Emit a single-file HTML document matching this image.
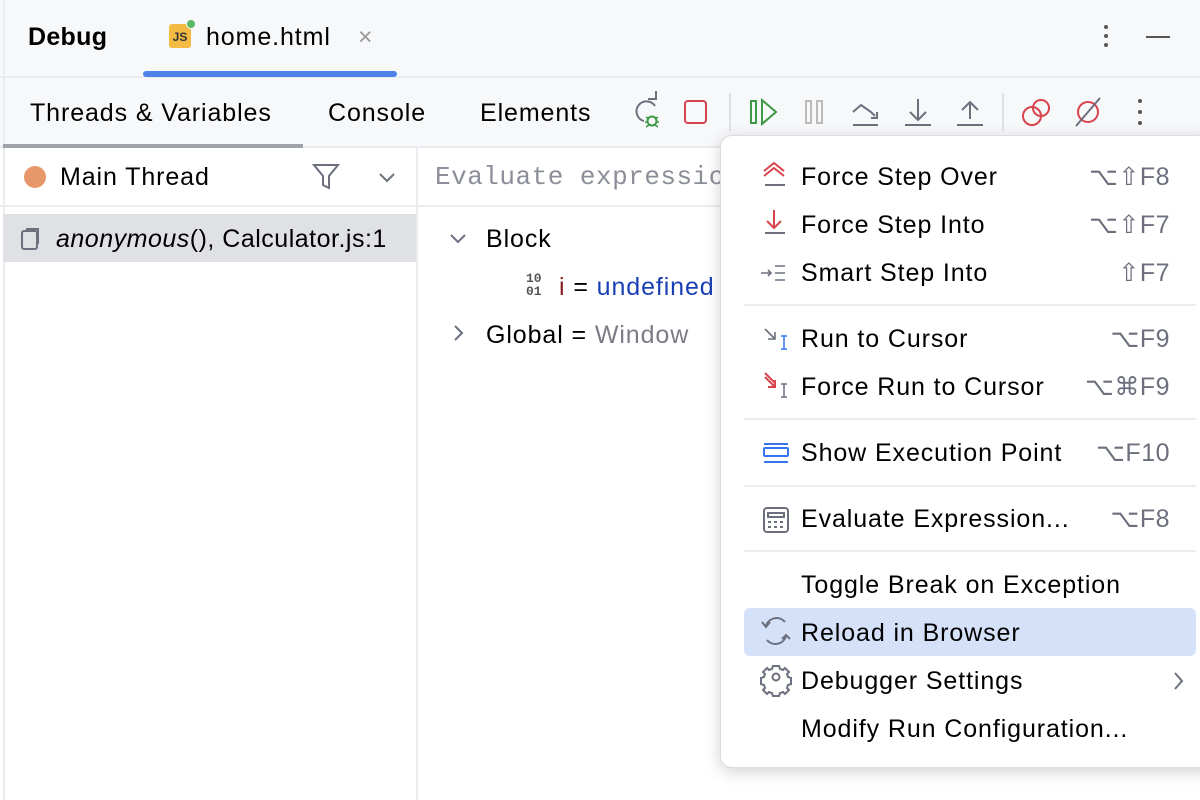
<!DOCTYPE html>
<html><head><style>
*{margin:0;padding:0;box-sizing:border-box}
body{width:1200px;height:800px;overflow:hidden;background:#fff;font-family:"Liberation Sans",sans-serif;color:#000;position:relative}
.abs{position:absolute}
.t{position:absolute;font-size:25px;letter-spacing:0.9px;white-space:nowrap;line-height:1}
.mi{position:absolute;left:801px;font-size:25px;letter-spacing:0.9px;line-height:1;white-space:nowrap}
.sc{position:absolute;right:30px;font-size:25px;letter-spacing:0.5px;color:#6c707e;line-height:1}
.sep{position:absolute;left:744px;width:452px;height:2px;background:#ebecf0}
</style></head><body>
<div class="abs" style="left:0;top:0;width:1200px;height:148px;background:#f7f8fa"></div>
<div class="abs" style="left:3px;top:0;width:2px;height:800px;background:#ebecf0"></div>
<div class="abs" style="left:0;top:76px;width:1200px;height:2px;background:#ebecf0"></div>
<div class="abs" style="left:0;top:146px;width:1200px;height:2px;background:#ebecf0"></div>
<div class="t" style="left:28px;top:25px;font-weight:bold;letter-spacing:0.3px">Debug</div>
<div class="abs" style="left:169px;top:24px;width:22px;height:24px;background:#f4bb44;border-radius:3px;font-size:12px;font-weight:bold;line-height:26px;text-align:center;color:#333">JS</div>
<div class="abs" style="left:186px;top:19px;width:10px;height:10px;background:#5fb865;border-radius:50%;border:1px solid #f7f8fa"></div>
<div class="t" style="left:206px;top:25px">home.html</div>
<div class="t" style="left:358px;top:25px;color:#999">×</div>
<div class="abs" style="left:143px;top:71px;width:254px;height:6px;background:#4f82e8;border-radius:3px"></div>
<div class="abs" style="left:1104px;top:25px;width:4px;height:4px;background:#555;border-radius:50%;box-shadow:0 9px 0 #555,0 18px 0 #555"></div>
<div class="abs" style="left:1146px;top:36px;width:24px;height:2px;background:#555"></div>
<div class="t" style="left:30px;top:101px">Threads &amp; Variables</div>
<div class="t" style="left:328px;top:101px">Console</div>
<div class="t" style="left:480px;top:101px">Elements</div>
<div class="abs" style="left:3px;top:144px;width:300px;height:4px;background:#a0a3ab"></div>
<svg class="abs" style="left:620px;top:90px" width="540" height="45" viewBox="620 90 540 45">
<path d="M655 106a10 10 0 1 0-11 15" stroke="#6c707e" stroke-width="2" fill="none"/><path d="M648 99l8 0 0-8" stroke="#6c707e" stroke-width="2" fill="none"/>
<circle cx="652" cy="121" r="4.5" stroke="#3d9a45" stroke-width="2" fill="none"/><path d="M646 117l3 2M658 117l-3 2M645 122h3M656 122h3M646 127l3-2M658 127l-3-2" stroke="#3d9a45" stroke-width="1.5"/>
<rect x="685" y="101" width="21" height="22" rx="3" stroke="#d9434c" stroke-width="2" fill="none"/>
<line x1="730" y1="93" x2="730" y2="131" stroke="#dfe1e5" stroke-width="2"/>
<rect x="751" y="101" width="5" height="22" stroke="#3d9a45" stroke-width="2" fill="none"/><path d="M762 100l14 12-14 12z" stroke="#3d9a45" stroke-width="2" fill="none"/>
<rect x="806" y="101" width="5" height="22" stroke="#bbb" stroke-width="2" fill="none"/><rect x="817" y="101" width="5" height="22" stroke="#bbb" stroke-width="2" fill="none"/>
<path d="M853 112l8-7 10 7 4 4M877 112v6h-6" stroke="#6c707e" stroke-width="2" fill="none"/><line x1="853" y1="125" x2="878" y2="125" stroke="#6c707e" stroke-width="2"/>
<path d="M918 99v20M910 112l8 8 8-8" stroke="#6c707e" stroke-width="2" fill="none"/><line x1="905" y1="125" x2="931" y2="125" stroke="#6c707e" stroke-width="2"/>
<path d="M970 103v16M962 110l8-8 8 8" stroke="#6c707e" stroke-width="2" fill="none"/><line x1="957" y1="125" x2="983" y2="125" stroke="#6c707e" stroke-width="2"/>
<line x1="1003" y1="93" x2="1003" y2="131" stroke="#dfe1e5" stroke-width="2"/>
<circle cx="1032" cy="116" r="9" stroke="#d9434c" stroke-width="2" fill="none"/><circle cx="1041" cy="108" r="8" stroke="#d9434c" stroke-width="2" fill="none"/>
<circle cx="1088" cy="112" r="10" stroke="#d9434c" stroke-width="2" fill="none"/><line x1="1076" y1="126" x2="1100" y2="98" stroke="#6c707e" stroke-width="2"/>
<circle cx="1140" cy="101" r="2" fill="#555"/><circle cx="1140" cy="112" r="2" fill="#555"/><circle cx="1140" cy="123" r="2" fill="#555"/>
</svg>
<div class="abs" style="left:0;top:205px;width:1200px;height:2px;background:#ebecf0"></div>
<div class="abs" style="left:416px;top:148px;width:2px;height:652px;background:#ebecf0"></div>
<div class="abs" style="left:24px;top:166px;width:22px;height:22px;background:#e8976a;border-radius:50%"></div>
<div class="t" style="left:60px;top:165px">Main Thread</div>
<svg class="abs" style="left:312px;top:163px" width="90" height="28"><path d="M2 2h24l-9 11v12l-6-3v-9z" stroke="#6c707e" stroke-width="2" fill="none"/><path d="M68 11l7 7 7-7" stroke="#6c707e" stroke-width="2" fill="none"/></svg>
<div class="abs" style="left:3px;top:214px;width:413px;height:48px;background:#dfe1e5"></div>
<svg class="abs" style="left:20px;top:226px" width="24" height="26"><rect x="2" y="5" width="15" height="18" rx="2" stroke="#6c707e" stroke-width="2" fill="none"/><path d="M6 3h12v15" stroke="#6c707e" stroke-width="2" fill="none"/></svg>
<div class="t" style="left:56px;top:227px;letter-spacing:0.5px"><i>anonymous</i>(), Calculator.js:1</div>
<div class="t" style="left:435px;top:164px;font-family:'Liberation Mono',monospace;color:#8c8f99;font-size:26px;letter-spacing:0.5px">Evaluate expression</div>
<svg class="abs" style="left:448px;top:228px" width="24" height="120"><path d="M3 7l7 7 7-7" stroke="#6c707e" stroke-width="2" fill="none"/><path d="M7 98l7 7-7 7" stroke="#6c707e" stroke-width="2" fill="none"/></svg>
<div class="t" style="left:486px;top:227px">Block</div>
<div class="abs" style="left:526px;top:272px;font-size:13px;line-height:13px;font-family:'Liberation Mono',monospace;color:#555;font-weight:bold">10<br>01</div>
<div class="t" style="left:559px;top:275px"><span style="color:#871b1b">i</span> = <span style="color:#1a3fb4">undefined</span></div>
<div class="t" style="left:486px;top:323px">Global = <span style="color:#7a7d85">Window</span></div>

<div class="abs" style="left:720px;top:135px;width:500px;height:633px;background:#fff;border:1px solid #dcdde0;border-radius:12px;box-shadow:0 4px 16px rgba(0,0,0,.18)"></div>
<div class="abs" style="left:744px;top:608px;width:452px;height:48px;background:#d5e0f9;border-radius:6px"></div>
<svg class="abs" style="left:755px;top:160px" width="40" height="590">
<g stroke="#d9434c" stroke-width="2" fill="none"><path d="M9 11l10-8 10 8M9 16l10-8 10 8"/><path d="M10 25h20" stroke="#6c707e"/><path d="M19 50v17M12 61l7 7 7-7"/><path d="M10 73h20" stroke="#6c707e"/></g>
<g stroke="#6c707e" stroke-width="1.6" fill="none"><path d="M6 113h10M13 110l3 3-3 3M20 106h10M20 113h10M20 120h10"/><path d="M10 169l10 10M20 172v7h-7"/></g>
<path d="M26 176h6M29 176v13M26 189h6" stroke="#3574f0" stroke-width="1.5" fill="none"/>
<path d="M10 217l10 10M20 220v7h-7M10 213l10 10" stroke="#d9434c" stroke-width="2" fill="none"/>
<path d="M26 224h6M29 224v13M26 237h6" stroke="#6c707e" stroke-width="1.5" fill="none"/>
<g stroke="#3574f0" stroke-width="2" fill="none"><path d="M9 284h24M9 302h24"/><rect x="9" y="288" width="24" height="8" rx="1"/></g>
<g stroke="#6c707e" stroke-width="2" fill="none"><rect x="9" y="348" width="24" height="24" rx="3"/><path d="M13 353h16v4H13z"/></g>
<g fill="#6c707e"><rect x="13" y="361" width="3" height="2"/><rect x="19" y="361" width="3" height="2"/><rect x="25" y="361" width="3" height="2"/><rect x="13" y="366" width="3" height="2"/><rect x="19" y="366" width="3" height="2"/><rect x="25" y="366" width="3" height="2"/></g>
<g stroke="#6c707e" stroke-width="2" fill="none"><path d="M11 466a11 11 0 0 1 19-4M31 476a11 11 0 0 1-19 4"/><path d="M7 462l4 5 4-5M27 479l4-4 4 4"/>
<g transform="translate(0,-4)"><circle cx="21" cy="521" r="3.5"/><path d="M18 510h6l1 3 3 1 2-2 4 4-2 2 1 3 3 1v6l-3 1-1 3 2 2-4 4-2-2-3 1-1 3h-6l-1-3-3-1-2 2-4-4 2-2-1-3-3-1v-6l3-1 1-3-2-2 4-4 2 2 3-1z"/></g></g>
</svg>
<div class="mi" style="top:165px">Force Step Over</div><div class="sc" style="top:165px">⌥⇧F8</div>
<div class="mi" style="top:213px">Force Step Into</div><div class="sc" style="top:213px">⌥⇧F7</div>
<div class="mi" style="top:261px">Smart Step Into</div><div class="sc" style="top:261px">⇧F7</div>
<div class="sep" style="top:304px"></div>
<div class="mi" style="top:327px">Run to Cursor</div><div class="sc" style="top:327px">⌥F9</div>
<div class="mi" style="top:375px">Force Run to Cursor</div><div class="sc" style="top:375px">⌥⌘F9</div>
<div class="sep" style="top:418px"></div>
<div class="mi" style="top:441px">Show Execution Point</div><div class="sc" style="top:441px">⌥F10</div>
<div class="sep" style="top:485px"></div>
<div class="mi" style="top:507px">Evaluate Expression...</div><div class="sc" style="top:507px">⌥F8</div>
<div class="sep" style="top:550px"></div>
<div class="mi" style="top:573px">Toggle Break on Exception</div>
<div class="mi" style="top:621px">Reload in Browser</div>
<div class="mi" style="top:669px">Debugger Settings</div>
<svg class="abs" style="left:1172px;top:670px" width="14" height="22"><path d="M3 3l7 8-7 8" stroke="#6c707e" stroke-width="2" fill="none"/></svg>
<div class="mi" style="top:717px">Modify Run Configuration...</div>
</body></html>
